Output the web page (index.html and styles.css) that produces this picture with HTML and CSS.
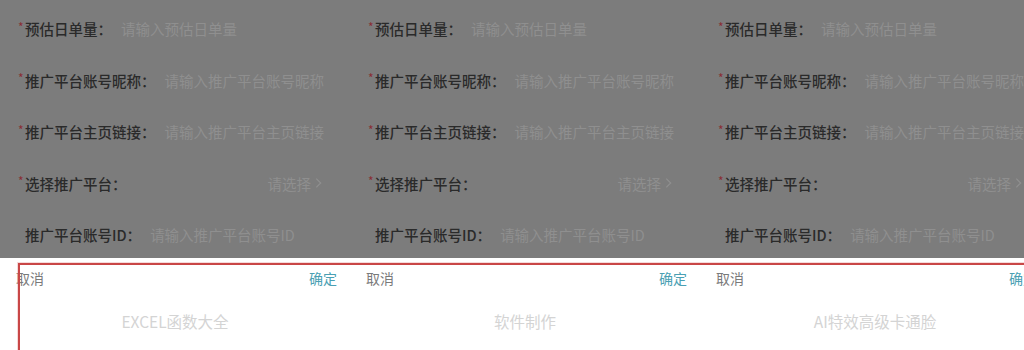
FILE: index.html
```html
<!DOCTYPE html>
<html lang="zh-CN">
<head>
<meta charset="utf-8">
<title>推广平台表单</title>
<link rel="stylesheet" href="styles.css">
</head>
<body>
<div class="screen">
  <section class="panel">
    <div class="form">
      <div class="row"><span class="req">*</span><span class="label">预估日单量：</span><span class="ph">请输入预估日单量</span></div>
      <div class="row"><span class="req">*</span><span class="label">推广平台账号昵称：</span><span class="ph">请输入推广平台账号昵称</span></div>
      <div class="row"><span class="req">*</span><span class="label">推广平台主页链接：</span><span class="ph">请输入推广平台主页链接</span></div>
      <div class="row"><span class="req">*</span><span class="label">选择推广平台：</span><span class="sel">请选择<svg class="chev" viewBox="0 0 8 12"><polyline points="1.5,1 6.5,6 1.5,11"/></svg></span></div>
      <div class="row"><span class="req"></span><span class="label">推广平台账号ID：</span><span class="ph">请输入推广平台账号ID</span></div>
    </div>
    <div class="sheet">
      <div class="sheet-head"><span class="cancel">取消</span><span class="ok">确定</span></div>
      <div class="picker"><div class="item">EXCEL函数大全</div></div>
    </div>
  </section>
  <section class="panel">
    <div class="form">
      <div class="row"><span class="req">*</span><span class="label">预估日单量：</span><span class="ph">请输入预估日单量</span></div>
      <div class="row"><span class="req">*</span><span class="label">推广平台账号昵称：</span><span class="ph">请输入推广平台账号昵称</span></div>
      <div class="row"><span class="req">*</span><span class="label">推广平台主页链接：</span><span class="ph">请输入推广平台主页链接</span></div>
      <div class="row"><span class="req">*</span><span class="label">选择推广平台：</span><span class="sel">请选择<svg class="chev" viewBox="0 0 8 12"><polyline points="1.5,1 6.5,6 1.5,11"/></svg></span></div>
      <div class="row"><span class="req"></span><span class="label">推广平台账号ID：</span><span class="ph">请输入推广平台账号ID</span></div>
    </div>
    <div class="sheet">
      <div class="sheet-head"><span class="cancel">取消</span><span class="ok">确定</span></div>
      <div class="picker"><div class="item">软件制作</div></div>
    </div>
  </section>
  <section class="panel">
    <div class="form">
      <div class="row"><span class="req">*</span><span class="label">预估日单量：</span><span class="ph">请输入预估日单量</span></div>
      <div class="row"><span class="req">*</span><span class="label">推广平台账号昵称：</span><span class="ph">请输入推广平台账号昵称</span></div>
      <div class="row"><span class="req">*</span><span class="label">推广平台主页链接：</span><span class="ph">请输入推广平台主页链接</span></div>
      <div class="row"><span class="req">*</span><span class="label">选择推广平台：</span><span class="sel">请选择<svg class="chev" viewBox="0 0 8 12"><polyline points="1.5,1 6.5,6 1.5,11"/></svg></span></div>
      <div class="row"><span class="req"></span><span class="label">推广平台账号ID：</span><span class="ph">请输入推广平台账号ID</span></div>
    </div>
    <div class="sheet">
      <div class="sheet-head"><span class="cancel">取消</span><span class="ok">确定</span></div>
      <div class="picker"><div class="item">AI特效高级卡通脸</div></div>
    </div>
  </section>
  <div class="annot"></div>
</div>
</body>
</html>
```

FILE: styles.css
```css
* { box-sizing: border-box; }
html, body {
  margin: 0;
  padding: 0;
  background: #ffffff;
}
body {
  font-family: "Noto Sans CJK SC", "Noto Sans", sans-serif;
  font-size: 14px;
}
.screen {
  position: relative;
  width: 1024px;
  height: 350px;
  overflow: hidden;
  display: flex;
}
.panel {
  flex: 0 0 350px;
  width: 350px;
  display: flex;
  flex-direction: column;
}
.form {
  height: 258px;
  background: #7c7c7c;
  padding-top: 3px;
}
.row {
  height: 51.5px;
  display: flex;
  align-items: center;
  padding-left: 18px;
  padding-right: 28px;
  white-space: nowrap;
  overflow: hidden;
}
.req {
  width: 7px;
  flex: 0 0 7px;
  color: #8a2f35;
  font-size: 12px;
  line-height: 1;
  margin-top: -4px;
}
.label {
  color: #2a2a2a;
  font-weight: 500;
  font-size: 14.5px;
}
.ph {
  margin-left: 9px;
  color: #8f8f8f;
  font-size: 14.5px;
}
.sel {
  margin-left: auto;
  color: #8f8f8f;
  font-size: 14.5px;
  display: flex;
  align-items: center;
  gap: 4px;
}
.chev {
  width: 7px;
  height: 12px;
  fill: none;
  stroke: #8f8f8f;
  stroke-width: 1.4;
}
.sheet {
  flex: 1;
  background: #ffffff;
}
.sheet-head {
  height: 40px;
  display: flex;
  align-items: center;
  justify-content: space-between;
  padding: 0 13px 0 16px;
  font-size: 14px;
}
.cancel { color: #7a7a7a; }
.ok { color: #4a9fb3; }
.picker {
  padding-top: 7px;
}
.item {
  height: 32px;
  line-height: 32px;
  text-align: center;
  color: #d4d4d4;
  font-size: 15.5px;
}
.annot {
  position: absolute;
  left: 18px;
  top: 263px;
  right: -10px;
  bottom: -10px;
  border: 2px solid #c94747;
  box-shadow: 0 0 0 1px rgba(230, 150, 150, 0.35);
  pointer-events: none;
}
```
